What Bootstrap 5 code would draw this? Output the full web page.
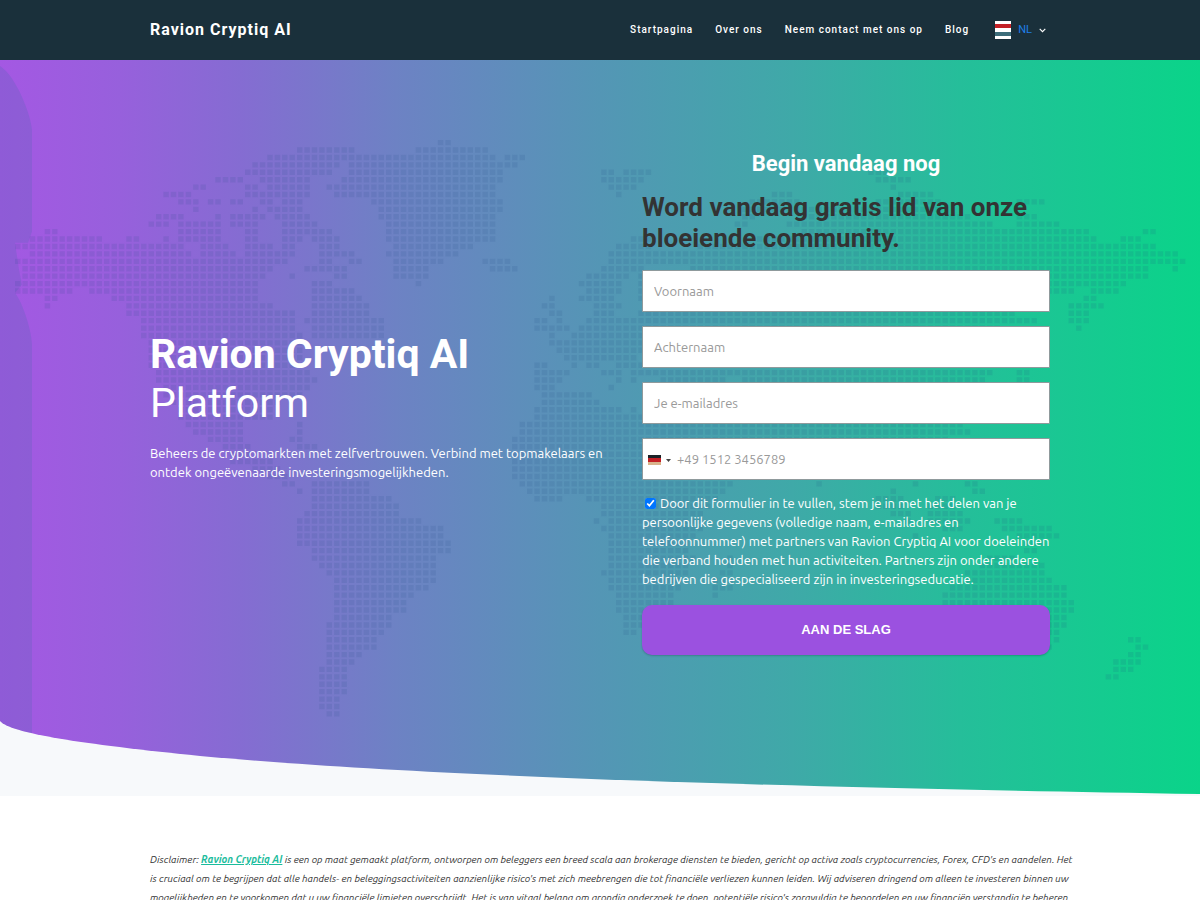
<!DOCTYPE html>
<html lang="nl">
<head>
<meta charset="utf-8">
<meta name="viewport" content="width=device-width, initial-scale=1">
<title>Ravion Cryptiq AI</title>
<link href="https://cdn.jsdelivr.net/npm/bootstrap@5.3.0/dist/css/bootstrap.min.css" rel="stylesheet">
<style>
body{font-family:Ubuntu,"Noto Sans",sans-serif;font-size:13px;color:#333;background:#fff}
.page-wrap{max-width:900px;margin:0 auto}
.site-head{background:#1a303b;height:60px}
.brand-name{font:700 16px/20px Roboto,sans-serif;letter-spacing:1px;color:#fff;text-decoration:none}
.menu{gap:22px}
.menu a{font:500 10px/20px Roboto,sans-serif;letter-spacing:1px;color:#fff;text-decoration:none}
.lang{font:400 11px/20px Roboto,sans-serif;color:#1f7fe8;margin:0 3px 0 7px}
.hero{background:#f7f9fb;padding:90px 0 141px}
.hero-bg{position:absolute;inset:0;width:100%;height:100%}
.hero h1{font:700 41px/49px Roboto,sans-serif;margin:0 0 16px;padding-top:7px}
.hero h1 span{font-weight:400}
.lead-text{line-height:19px;white-space:nowrap}
.form-col{padding-left:42px}
.form-title{font:700 22px/28px Roboto,sans-serif;margin-bottom:14px}
.form-sub{font:700 26px/31px Roboto,sans-serif;color:#333;margin-bottom:16px}
.field{border:1px solid #8f9a9c;border-radius:1px;height:42px;padding:0 11px;font-size:13px;color:#333;margin-bottom:14px}
.field::placeholder{color:#999;opacity:1}
.phone-field{padding-left:34px}
.dial{position:absolute;left:6px;top:14px;height:16px;gap:5px}
.consent{line-height:19px;margin:6px 0 16px}
.consent input{width:11px;height:11px;margin:0 1px 0 3px;vertical-align:-1px}
.cta{background:#9b51e0;border-radius:10px;height:50px;color:#fff;font:700 13px/20px "Liberation Sans",sans-serif;box-shadow:0 1px 2px #0003}
.cta:hover{background:#8a43cc;color:#fff}
.disclaimer{padding-top:54px;font-size:10px;line-height:19px;font-style:italic;white-space:nowrap}
.disclaimer a{color:#1abc9c;font-weight:700}
</style>
</head>
<body>
<header class="site-head d-flex align-items-center">
 <div class="page-wrap w-100 d-flex justify-content-between align-items-center">
  <a class="brand-name" href="#">Ravion Cryptiq AI</a>
  <nav class="menu d-flex align-items-center">
   <a href="#">Startpagina</a><a href="#">Over ons</a><a href="#">Neem contact met ons op</a><a href="#">Blog</a>
   <button type="button" class="btn p-0 border-0 ms-1 me-1 d-flex align-items-center">
    <svg width="16" height="18" viewBox="0 0 16 18" aria-hidden="true"><path fill="#fff" d="M0 0h16v18H0z"/><path fill="#c32026" d="M0 3h16v4H0z"/><path fill="#3d6d7a" d="M0 11h16v4H0z"/></svg>
    <span class="lang">NL</span>
    <svg class="ms-1" width="7" height="5" viewBox="0 0 7 5" fill="none" stroke="#fff" stroke-width="1.1" aria-hidden="true"><path d="M.7.8 3.5 3.6 6.3.8"/></svg>
   </button>
  </nav>
 </div>
</header>
<main>
<section class="hero position-relative">
 <svg class="hero-bg" viewBox="0 60 1200 737" preserveAspectRatio="none" aria-hidden="true">
  <defs>
   <linearGradient id="sky"><stop offset="0" stop-color="#a458e3"/><stop offset=".1" stop-color="#9760dc"/><stop offset=".2" stop-color="#856cd2"/><stop offset=".33" stop-color="#6d82c4"/><stop offset=".5" stop-color="#5496b5"/><stop offset=".66" stop-color="#3fa9a8"/><stop offset=".8" stop-color="#25be9a"/><stop offset="1" stop-color="#0ad489"/></linearGradient>
   <clipPath id="wave"><path d="M0 60H1200V795C700 787 400 775 200 757C80 745 10 734 0 722Z"/></clipPath>
  </defs>
  <g clip-path="url(#wave)">
   <path fill="url(#sky)" d="M0 60H1200V797H0Z"/>
   <path fill="#5a66b8" fill-opacity=".28" d="M0 66C16 76 31 115 32 130V232L28 243H15L19 270 22 285 15 293C24 305 32 334 32 345V797H0Z"/>
   <path id="land" fill="#1f4a80" fill-opacity=".12"/>
  </g>
 </svg>
 <div class="page-wrap position-relative text-white">
  <div class="row g-0 align-items-center">
   <div class="col-6">
    <h1>Ravion Cryptiq AI<br><span>Platform</span></h1>
    <p class="lead-text mb-0">Beheers de cryptomarkten met zelfvertrouwen. Verbind met topmakelaars en<br>ontdek ongeëvenaarde investeringsmogelijkheden.</p>
   </div>
   <div class="col-6 form-col">
    <form>
     <h2 class="form-title text-center">Begin vandaag nog</h2>
     <h3 class="form-sub">Word vandaag gratis lid van onze bloeiende community.</h3>
     <input class="field d-block w-100" type="text" placeholder="Voornaam" aria-label="Voornaam">
     <input class="field d-block w-100" type="text" placeholder="Achternaam" aria-label="Achternaam">
     <input class="field d-block w-100" type="email" placeholder="Je e-mailadres" aria-label="Je e-mailadres">
     <div class="position-relative">
      <input class="field phone-field d-block w-100" type="tel" placeholder="+49 1512 3456789" aria-label="Telefoonnummer">
      <button type="button" class="dial btn p-0 border-0 d-flex align-items-center" aria-label="Landcode">
       <svg width="13" height="10" viewBox="0 0 13 10"><path fill="#1b2227" d="M0 0h13v3H0z"/><path fill="#c32026" d="M0 3h13v4H0z"/><path fill="#d9b48c" d="M0 7h13v3H0z"/></svg>
       <svg width="5" height="3" viewBox="0 0 5 3"><path fill="#444" d="M0 0h5L2.500 3z"/></svg>
      </button>
     </div>
     <p class="consent"><input type="checkbox" id="ok" checked> <label class="d-inline" for="ok">Door dit formulier in te vullen, stem je in met het delen van je<br>persoonlijke gegevens (volledige naam, e-mailadres en<br>telefoonnummer) met partners van Ravion Cryptiq AI voor doeleinden<br>die verband houden met hun activiteiten. Partners zijn onder andere<br>bedrijven die gespecialiseerd zijn in investeringseducatie.</label></p>
     <button type="submit" class="cta btn w-100 border-0">AAN DE SLAG</button>
    </form>
   </div>
  </div>
 </div>
</section>
<section class="page-wrap disclaimer">
 <p class="mb-0">Disclaimer: <a href="#">Ravion Cryptiq AI</a> is een op maat gemaakt platform, ontworpen om beleggers een breed scala aan brokerage diensten te bieden, gericht op activa zoals cryptocurrencies, Forex, CFD's en aandelen. Het<br>is cruciaal om te begrijpen dat alle handels- en beleggingsactiviteiten aanzienlijke risico's met zich meebrengen die tot financiële verliezen kunnen leiden. Wij adviseren dringend om alleen te investeren binnen uw<br>mogelijkheden en te voorkomen dat u uw financiële limieten overschrijdt. Het is van vitaal belang om grondig onderzoek te doen, potentiële risico's zorgvuldig te beoordelen en uw financiën verstandig te beheren.</p>
</section>
</main>
<script src="https://cdn.jsdelivr.net/npm/bootstrap@5.3.0/dist/js/bootstrap.bundle.min.js"></script>
<script>
// Dotted world map: one line per row of dots, each span is the west-east extent of land.
const rows = `437-451
296-354 415-488
267-495 505-525
252-339 349-502 505-518
245-332 349-503 601-614 623-651 868-885
215-243 260-310 341-503 601-644 876-911
193-205 245-257 267-310 327-495 608-636 890-897
163-191 245-310 334-495 616-621 772-792 898-933
178-199 207-220 230-243 260-272 282-302 371-503 750-800 876-940 1017-1045
193-198 252-257 267-302 378-503 742-940
156-183 215-220 230-265 275-280 282-309 378-495 742-755 800-970 1017-1037
149-168 178-220 230-257 282-316 386-495 735-747 790-992 1017-1059
44-57 178-220 245-257 282-331 386-495 800-1089 1144-1156
30-101 126-138 163-168 178-220 245-257 282-302 312-339 386-495 630-650 760-1097 1121-1141
15-183 200-227 245-272 282-294 319-339 393-472 616-647 700-1156
30-191 200-235 245-294 319-354 386-457 608-1179
15-287 319-332 349-361 393-443 482-510 608-1186
22-272 304-347 393-428 489-517 601-640 690-1149 1173-1178
22-264 289-294 334-347 393-428 586-629 640-1149
15-257 312-331 415-420 578-621 640-1126
15-72 89-257 312-354 586-621 640-1075 1091-1119
44-57 111-257 312-361 549-555 578-613 640-1040 1084-1097
44-49 126-272 312-369 541-555 593-620 1069-1104
126-294 312-369 549-562 593-613 640-1015 1069-1090
141-294 304-383 534-547 556-562 586-1037 1069-1090
141-294 312-383 534-570 578-1000 1076-1082
141-302 312-380 549-555 571-640
149-302 549-640
149-302 556-640
149-302 563-636
149-294 534-547 571-577 586-600 615-640
156-310 534-570 601-621 630-992 1017-1029
156-316 534-562 615-621 630-636 660-728 742-985 1017-1029
160-310 534-555 608-613
165-302 541-591
170-280 541-599
178-273 534-621 630-636
180-273 534-640
185-243 297-302 519-963
193-243 297-302 519-970
208-243 289-302 512-948
223-250 295-316 512-640
230-250 512-640
230-273 512-640
252-280 512-640
267-290 512-640
282-295 312-369 519-732 816-821 913-919 965-978
297-302 312-369 526-725 890-895 972-985
312-391 534-562 586-720 876-903 935-958
312-400 601-710 876-905 928-955
304-400 601-700 890-911 925-963
297-421 593-600 608-700 905-912 930-970 995-1023
297-443 601-700 940-963 1002-1052
297-443 608-695 912-918 1017-1060
297-451 608-690 1025-1044
312-451 608-690 1025-1037
312-436 608-692 728-734 985-1014
319-436 608-690 725-735 980-1045
326-436 601-690 720-735 965-1045
334-436 608-680 715-730 965-1052
334-428 608-680 715-730 950-1067
334-413 615-673 712-718 943-1067
334-406 615-673 943-1075
334-406 615-665 940-1075
334-391 623-650 940-1067
326-391 623-650 940-1067
326-384 623-636 1050-1059
326-376 1054-1060 1128-1141
326-376 1045-1052 1136-1149
326-361 1128-1141
326-354 1110-1139
319-347 1110-1131
319-347 1105-1117
319-347
319-347
319-339
319-339
326-339`.split("\n");
const step = 7.42;
let d = "";
rows.forEach((line, r) => line.split(" ").forEach(span => {
  const [a, b] = span.split("-").map(Number);
  const last = Math.round((b - 20) / step);
  for (let c = Math.round((a - 15) / step); c <= last; c++)
    d += `M${(15 + c * step).toFixed(1)} ${(140 + r * 7.43).toFixed(1)}h5.4v5.4h-5.4z`;
}));
document.getElementById("land").setAttribute("d", d);
</script>
</body>
</html>
